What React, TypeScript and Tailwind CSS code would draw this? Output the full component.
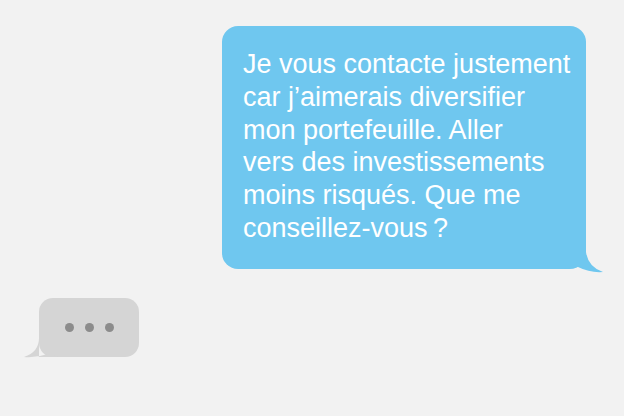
export default function App() {
  return (
    <div className="w-[624px] h-[416px] bg-[#f2f2f2] flex flex-col overflow-hidden" style={{ fontFamily: '"Liberation Sans", Arial, sans-serif' }}>
      <div className="relative ml-[222px] mt-[26px] w-[364px] h-[243px] rounded-[16px] bg-[#6fc7ef] pl-[21px] pt-[22px]">
        <svg className="absolute left-0 top-0 overflow-visible" width="364" height="243">
          <path d="M340 200 L364 200 L364 226 Q366 241 381 246 Q368 247 356 241 L340 243 Z" fill="#6fc7ef" />
        </svg>
        <p className="relative text-white text-[27px] leading-[32.8px] whitespace-pre">
          {"Je vous contacte justement\ncar j’aimerais diversifier\nmon portefeuille. Aller\nvers des investissements\nmoins risqués. Que me\nconseillez-vous\u202f?"}
        </p>
      </div>
      <div className="relative ml-[39px] mt-[29px] w-[100px] h-[59px] rounded-[14px] bg-[#d5d5d5] flex items-center justify-center gap-[11px]">
        <svg className="absolute left-0 top-0 overflow-visible" width="100" height="59">
          <path d="M0 30 L0 40 Q0 54 -15 59 Q-3 60 9 56 L20 59 L0 59 Z" fill="#d5d5d5" />
        </svg>
        <span className="relative w-[9px] h-[9px] rounded-full bg-[#8c8c8c]" />
        <span className="relative w-[9px] h-[9px] rounded-full bg-[#8c8c8c]" />
        <span className="relative w-[9px] h-[9px] rounded-full bg-[#8c8c8c]" />
      </div>
    </div>
  );
}
